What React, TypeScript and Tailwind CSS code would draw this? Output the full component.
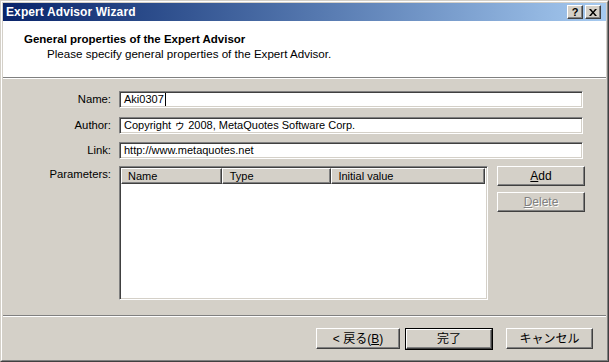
import React from "react";

const font = "font-['Liberation_Sans','Noto_Sans_CJK_JP',sans-serif]";

// raised 3d frame used by buttons and list headers
const raised =
  "border border-t-white border-l-white border-b-[#404040] border-r-[#404040] shadow-[inset_-1px_-1px_0_#808080,inset_1px_1px_0_#d4d0c8] bg-[#d4d0c8]";
// sunken frame for edits and list view
const sunken =
  "border border-t-[#808080] border-l-[#808080] border-b-white border-r-white shadow-[inset_1px_1px_0_#404040,inset_-1px_-1px_0_#d4d0c8] bg-white";

const Field = ({ label, value, caret }: { label: string; value: string; caret?: boolean }) => (
  <div className="flex items-center h-[17px]">
    <div className="w-[108px] text-right text-[11.3px] leading-[17px] text-black">{label}</div>
    <div className={`ml-[8px] w-[464px] h-[17px] flex items-center pl-[4px] text-[11px] leading-[15px] text-black ${sunken}`}>
      <span>{value}</span>
      {caret && <span className="inline-block w-[1px] h-[13px] bg-black ml-[1px]" />}
    </div>
  </div>
);

const App = () => {
  return (
    <div className={`w-[609px] h-[362px] ${font} bg-[#d4d0c8]`}>
      <div className="w-full h-full border border-t-[#d4d0c8] border-l-[#d4d0c8] border-b-[#404040] border-r-[#404040]">
        <div className="w-full h-full border border-t-white border-l-white border-b-[#808080] border-r-[#808080] p-[1px] flex flex-col">
          {/* title bar */}
          <div className="h-[18px] flex items-center justify-between bg-gradient-to-r from-[#0a246a] to-[#a6caf0] pl-[3px] pr-[5px]">
            <span className="text-white font-bold text-[12px] tracking-[0.1px]">Expert Advisor Wizard</span>
            <div className="flex gap-[2px]">
              <div className={`w-[16px] h-[14px] flex items-center justify-center text-[11px] font-bold leading-none ${raised}`}>?</div>
              <div className={`w-[16px] h-[14px] flex items-center justify-center ${raised}`}>
                <svg width="8" height="7" viewBox="0 0 8 7">
                  <path d="M0 0h2l2 2.5L6 0h2L5 3.5 8 7H6L4 4.5 2 7H0l3-3.5z" fill="black" />
                </svg>
              </div>
            </div>
          </div>

          {/* header */}
          <div className="h-[56px] bg-white pl-[21px] pt-[11px]">
            <div className="text-[11.5px] font-bold text-black leading-[14px]">General properties of the Expert Advisor</div>
            <div className="text-[11.6px] text-black leading-[14px] pl-[23px] mt-[1px]">Please specify general properties of the Expert Advisor.</div>
          </div>
          <div className="h-[1px] bg-[#808080]" />
          <div className="h-[1px] bg-white" />

          {/* body */}
          <div className="h-[236px] pt-[12px] flex flex-col">
            <Field label="Name:" value="Aki0307" caret />
            <div className="mt-[9px]">
              <Field label="Author:" value="Copyright ゥ 2008, MetaQuotes Software Corp." />
            </div>
            <div className="mt-[8px]">
              <Field label="Link:" value="http://www.metaquotes.net" />
            </div>
            <div className="mt-[7px] flex">
              <div className="w-[108px] text-right text-[11.3px] leading-[15px] text-black pt-[1px]">Parameters:</div>
              <div className={`ml-[8px] w-[369px] h-[134px] p-[1px] ${sunken}`}>
                <div className="flex h-[16px] w-[364px] text-[11px] text-black">
                  <div className={`w-[101px] pl-[6px] flex items-center ${raised}`}>Name</div>
                  <div className={`w-[110px] pl-[7px] flex items-center ${raised}`}>Type</div>
                  <div className={`w-[154px] pl-[6px] flex items-center ${raised}`}>Initial value</div>
                </div>
              </div>
              <div className="ml-[9px] flex flex-col gap-[6px]">
                <button className={`w-[88px] h-[20px] text-[12px] text-black flex items-center justify-center ${raised}`}>
                  <span><span className="underline">A</span>dd</span>
                </button>
                <button className={`w-[88px] h-[20px] text-[12px] text-[#808080] flex items-center justify-center [text-shadow:1px_1px_0_#fff] ${raised}`}>
                  <span><span className="underline">D</span>elete</span>
                </button>
              </div>
            </div>
          </div>

          <div className="h-[1px] bg-[#808080]" />
          <div className="h-[1px] bg-white" />

          {/* footer */}
          <div className="flex-1 pt-[11px] pl-[313px] flex items-start">
            <button className={`w-[84px] h-[21px] text-[12px] text-black flex items-center justify-center ${raised}`}>
              <span>&lt; 戻る(<span className="underline">B</span>)</span>
            </button>
            <div className="ml-[5px] w-[88px] h-[22px] border border-black">
              <button className={`w-full h-full text-[12px] text-black flex items-center justify-center ${raised}`}>完了</button>
            </div>
            <button className={`ml-[13px] w-[87px] h-[21px] text-[12px] text-black flex items-center justify-center ${raised}`}>キャンセル</button>
          </div>
        </div>
      </div>
    </div>
  );
};

export default App;
